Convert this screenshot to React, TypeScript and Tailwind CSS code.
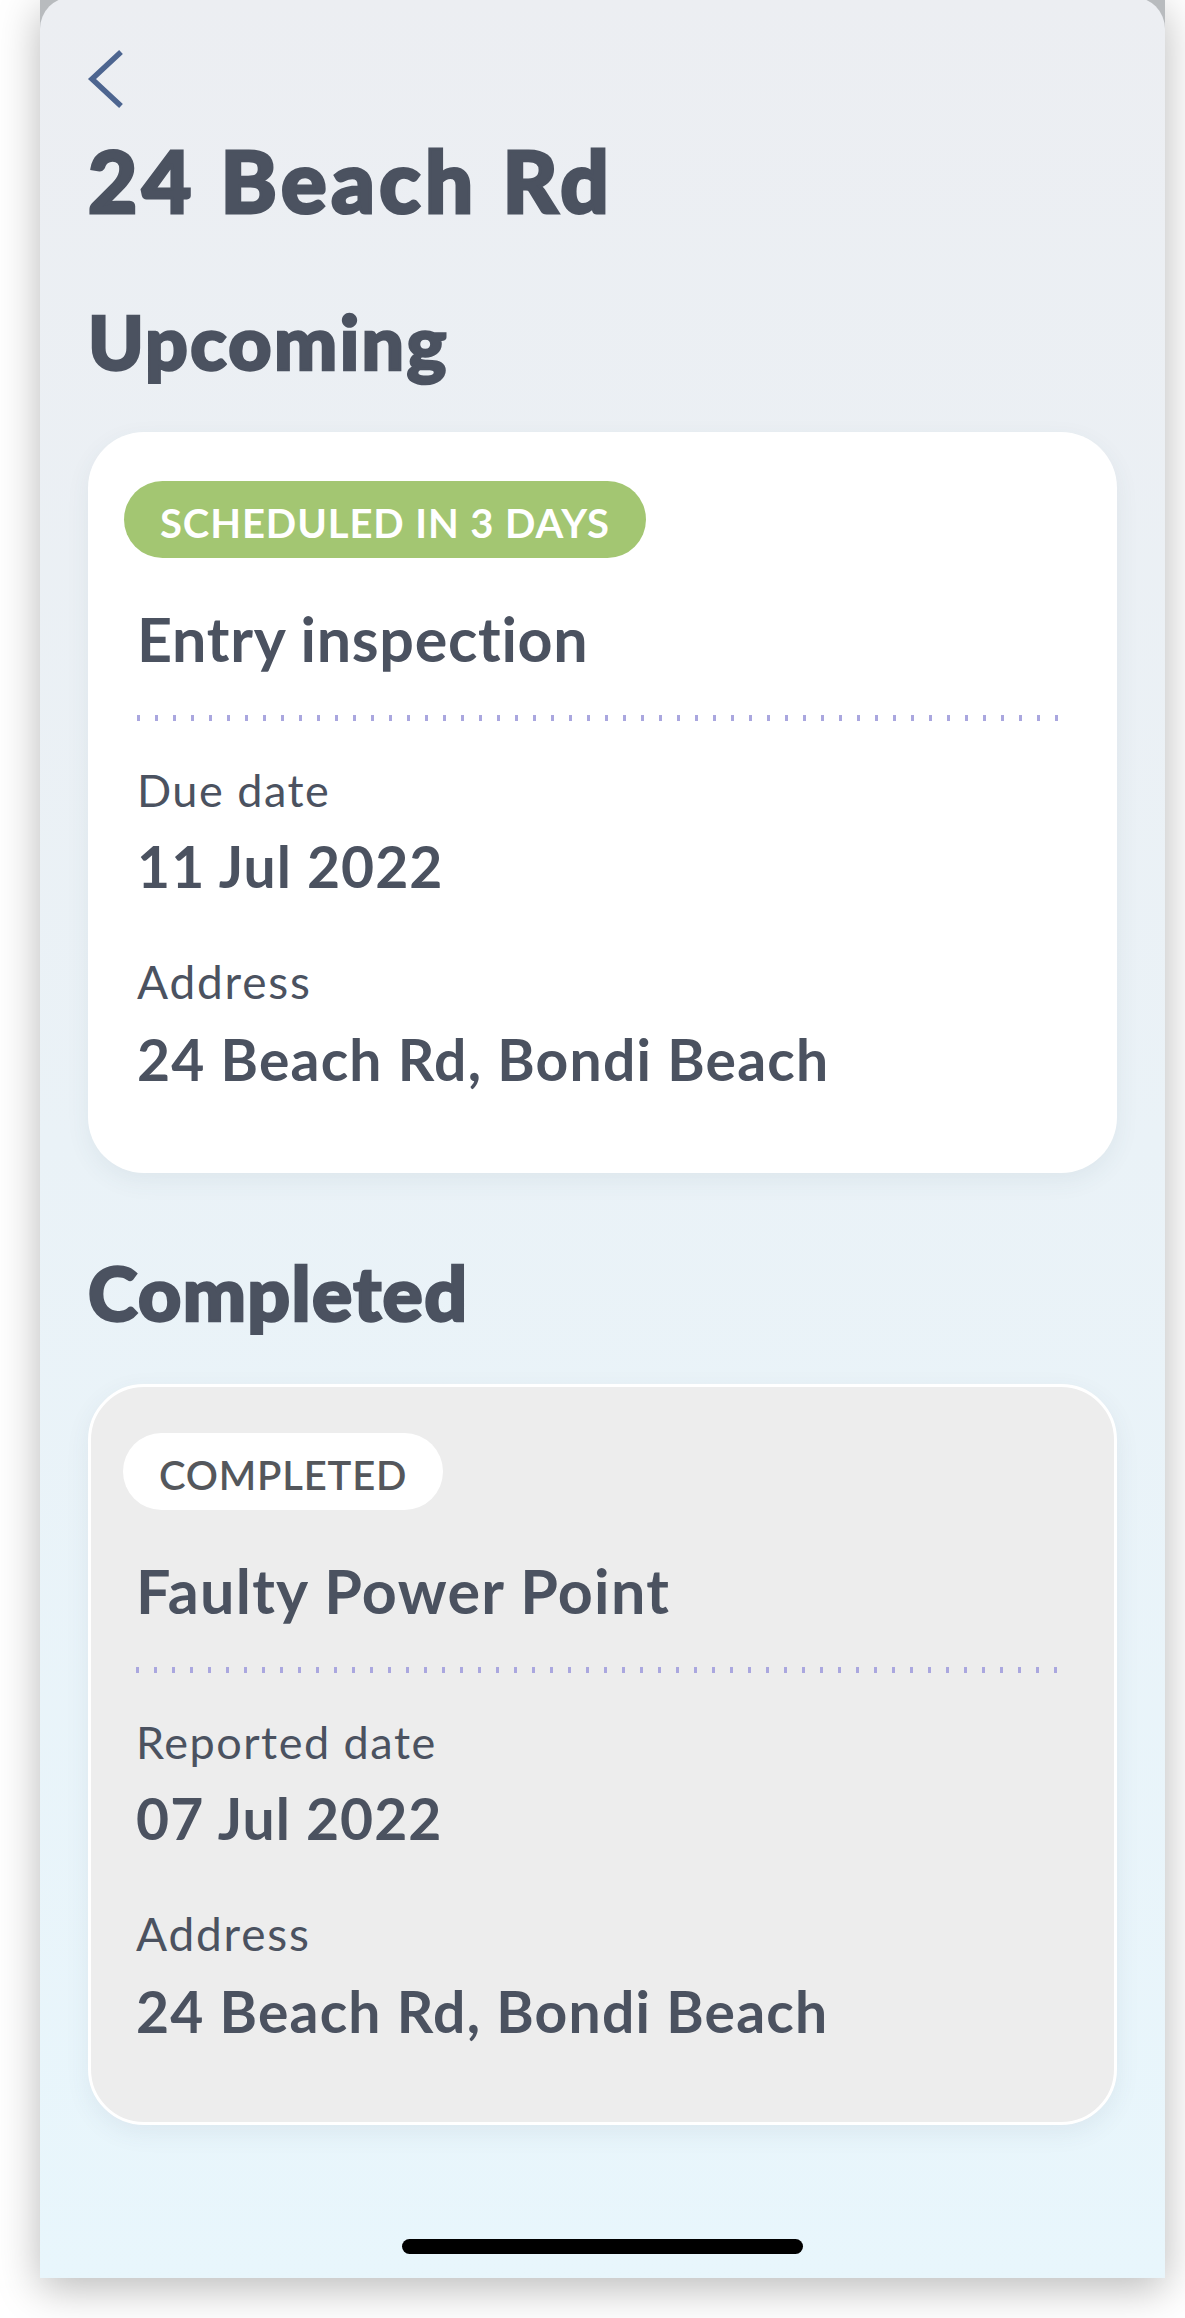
import React from "react"

type JobProps = {
  badge: string
  badgeClass: string
  title: string
  titleClass: string
  dateLabel: string
  date: string
  address: string
  cardClass: string
}

function Dots() {
  return (
    <div className="mt-[46px] h-[6px] w-full bg-[repeating-linear-gradient(90deg,#aaa7df_0px,#aaa7df_3px,transparent_3px,transparent_18px)]" />
  )
}

function JobCard({ badge, badgeClass, title, titleClass, dateLabel, date, address, cardClass }: JobProps) {
  return (
    <div className={cardClass}>
      <div className="flex">
        <span
          className={`rounded-full px-[36px] pt-[22px] pb-[15px] text-[40px] leading-none font-bold ${badgeClass}`}
        >
          {badge}
        </span>
      </div>
      <div className="pl-[13px]">
        <h3 className={`mt-[50px] text-[61px] leading-none font-bold ${titleClass}`}>{title}</h3>
        <Dots />
        <p className="mt-[47px] text-[45px] leading-none tracking-[1.5px]">{dateLabel}</p>
        <p className="mt-[25px] text-[57px] leading-none font-bold tracking-[1.1px]">{date}</p>
        <p className="mt-[64px] text-[46px] leading-none tracking-[1.8px]">Address</p>
        <p className="mt-[26px] text-[57px] leading-none font-bold tracking-[1.2px]">{address}</p>
      </div>
    </div>
  )
}

export default function App() {
  return (
    <div className="min-h-[2318px] bg-white pl-[40px] font-['Lato','Noto_Sans',sans-serif] text-[#4b5260]">
      <div className="h-[2278px] w-[1125px] overflow-hidden bg-[#b8bbbe] shadow-[0_10px_40px_rgba(0,0,0,0.28)]">
        <div className="-mt-[3px] flex h-[2281px] flex-col rounded-t-[32px] bg-gradient-to-b from-[#eceef2] to-[#e8f6fc] px-[48px] pt-[51px]">
          {/* back */}
          <svg viewBox="0 0 40 62" className="-ml-[2px] h-[62px] w-[40px]">
            <path d="M35 4 L6 31 L35 58" fill="none" stroke="#4d6590" strokeWidth="5.5" />
          </svg>

          <h1 className="mt-[28px] text-[85px] leading-none font-black tracking-[4.6px] [-webkit-text-stroke:3px_#4b5260]">
            24 Beach Rd
          </h1>

          <h2 className="mt-[81px] text-[75px] leading-none font-black tracking-[2.4px] [-webkit-text-stroke:2.5px_#4b5260]">
            Upcoming
          </h2>

          <div className="mt-[53px]">
            <JobCard
              cardClass="h-[741px] rounded-[56px] bg-white pt-[49px] pr-[49px] pl-[36px] shadow-[0_8px_24px_rgba(60,80,100,0.07)]"
              badge="SCHEDULED IN 3 DAYS"
              badgeClass="bg-[#a3c672] text-white tracking-[0.9px]"
              title="Entry inspection"
              titleClass="tracking-[0.7px]"
              dateLabel="Due date"
              date="11 Jul 2022"
              address="24 Beach Rd, Bondi Beach"
            />
          </div>

          <h2 className="mt-[82px] text-[75px] leading-none font-black tracking-[1.4px] [-webkit-text-stroke:2.5px_#4b5260]">
            Completed
          </h2>

          <div className="mt-[54px]">
            <JobCard
              cardClass="h-[741px] rounded-[56px] border-[3px] border-white bg-[#ededed] pt-[46px] pr-[46px] pl-[32px] shadow-[0_8px_24px_rgba(60,80,100,0.08)]"
              badge="COMPLETED"
              badgeClass="bg-white text-[#54575c] font-semibold tracking-[0.8px]"
              title="Faulty Power Point"
              titleClass="tracking-[1.3px]"
              dateLabel="Reported date"
              date="07 Jul 2022"
              address="24 Beach Rd, Bondi Beach"
            />
          </div>

          <div className="mx-auto mt-[114px] h-[15px] w-[401px] rounded-full bg-black" />
        </div>
      </div>
    </div>
  )
}
